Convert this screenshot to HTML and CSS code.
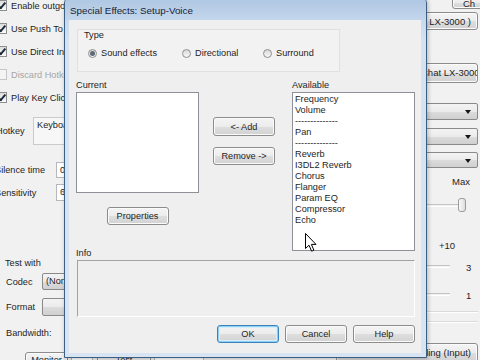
FILE: index.html
```html
<!DOCTYPE html>
<html lang="en">
<head>
    <meta charset="UTF-8">
    <title>Special Effects: Setup-Voice</title>
    <link rel="stylesheet" href="styles.css">
</head>
<body>
<div class="screen">
    <!-- background settings window -->
    <div class="app">
        <div class="app-left">
            <div class="check-row first"><span class="check on"></span>Enable outgoing voice</div>
            <div class="check-row"><span class="check on"></span>Use Push To Talk</div>
            <div class="check-row"><span class="check on"></span>Use Direct Input</div>
            <div class="check-row disabled"><span class="check"></span>Discard Hotkey</div>
            <div class="check-row"><span class="check on"></span>Play Key Click</div>

            <div class="field-row hotkey-row">
                <span class="field-label hotkey-label">Hotkey</span>
                <div class="hotkey-box">Keyboard</div>
            </div>
            <div class="field-row silence-row">
                <span class="field-label wide">Silence time</span>
                <div class="edit-box">0</div>
            </div>
            <div class="field-row sens-row">
                <span class="field-label wide">Sensitivity</span>
                <div class="edit-box">6</div>
            </div>

            <div class="test-label">Test with</div>
            <div class="field-row codec-row">
                <span class="field-label short">Codec</span>
                <div class="combo small">(None)</div>
            </div>
            <div class="field-row format-row">
                <span class="field-label short">Format</span>
                <div class="combo small"></div>
            </div>
            <div class="bandwidth">Bandwidth:</div>

            <div class="bottom-row">
                <button class="btn monitor">Monitor</button>
                <div class="edit-box tiny"></div>
                <button class="btn test">Test</button>
                <div class="edit-box tiny wide"></div>
            </div>
        </div>

        <div class="app-right">
            <button class="btn top-btn">Ch</button>
            <button class="btn lx-btn">(Logitech Chat LX-3000 )</button>
            <div class="btn lx-field">Chat LX-3000 (USB)</div>
            <div class="combo"></div>
            <div class="combo second"></div>
            <div class="combo third"></div>
            <div class="max-label">Max</div>
            <div class="slider">
                <span class="track"></span>
                <span class="thumb"></span>
            </div>
            <div class="plus10">+10</div>
            <div class="level first-level"><span class="track"></span><span class="num">3</span></div>
            <div class="level second-level"><span class="track"></span><span class="num">1</span></div>
            <div class="sep"></div>
            <div class="sep next"></div>
            <button class="btn rec-btn">Recording (Input)</button>
        </div>
    </div>

    <!-- dialog window -->
    <div class="dialog">
        <div class="title-bar">Special Effects: Setup-Voice</div>
        <div class="client">
            <div class="type-group">
                <div class="group-label">Type</div>
                <div class="radio-row">
                    <label class="radio"><span class="radio-dot on"></span>Sound effects</label>
                    <label class="radio"><span class="radio-dot"></span>Directional</label>
                    <label class="radio"><span class="radio-dot"></span>Surround</label>
                </div>
            </div>

            <div class="lists">
                <div class="col">
                    <div class="caption">Current</div>
                    <div class="listbox current"></div>
                    <button class="btn props">Properties</button>
                </div>
                <div class="col mid">
                    <button class="btn add">&lt;- Add</button>
                    <button class="btn remove">Remove -&gt;</button>
                </div>
                <div class="col">
                    <div class="caption">Available</div>
                    <ul class="listbox available">
                        <li>Frequency</li>
                        <li>Volume</li>
                        <li>--------------</li>
                        <li>Pan</li>
                        <li>--------------</li>
                        <li>Reverb</li>
                        <li>I3DL2 Reverb</li>
                        <li>Chorus</li>
                        <li>Flanger</li>
                        <li>Param EQ</li>
                        <li>Compressor</li>
                        <li>Echo</li>
                    </ul>
                </div>
            </div>

            <div class="caption info-caption">Info</div>
            <div class="info-box"></div>

            <div class="dialog-buttons">
                <button class="btn default">OK</button>
                <button class="btn">Cancel</button>
                <button class="btn">Help</button>
            </div>
        </div>
    </div>

    <svg class="cursor" width="13" height="20" viewBox="0 0 13 20">
        <path d="M0.5 0.5 L0.5 15.5 L4 12.2 L6.6 18.2 L8.9 17.2 L6.4 11.4 L11 11.4 Z" fill="#fff" stroke="#000" stroke-width="1" stroke-linejoin="round"/>
    </svg>
</div>
</body>
</html>
```

FILE: styles.css
```css
body {
    margin: 0;
    font-family: "Liberation Sans", Arial, sans-serif;
    font-size: 9.2px;
    color: #1e1e1e;
}
.screen {
    position: relative;
    width: 480px;
    height: 360px;
    overflow: hidden;
    background: #f1f1f1;
}

/* buttons */
.btn {
    display: block;
    font: inherit;
    color: inherit;
    width: 62px;
    height: 18px;
    padding: 0;
    box-sizing: border-box;
    border: 1px solid #8c8c8c;
    border-radius: 3px;
    background: linear-gradient(#f4f4f4 0%, #ececec 50%, #dedede 51%, #d2d2d2 100%);
    box-shadow: inset 0 0 0 1px #fbfbfb;
    white-space: nowrap;
    overflow: hidden;
}
.btn.default {
    border-color: #3c82b8;
    box-shadow: inset 0 0 0 1px #8fd0f4, inset 0 0 0 2px #d4eefc;
}

/* background window */
.app {
    display: flex;
    justify-content: space-between;
    height: 100%;
}
.app-left {
    width: 210px;
    margin-left: -4px;
    display: flex;
    flex-direction: column;
    white-space: nowrap;
}
.app-left > *,
.app-right > * {
    flex-shrink: 0;
}
.check-row {
    width: 72px;
    height: 23px;
    overflow: hidden;
    display: flex;
    align-items: center;
    gap: 4px;
}
.check-row.first {
    margin-top: -6px;
}
.check-row.disabled {
    color: #a6a6a6;
}
.check {
    position: relative;
    flex: none;
    width: 9px;
    height: 9px;
    border: 1px solid #8e8f8f;
    background: linear-gradient(#dcdcdc, #fbfbfb);
}
.check-row.disabled .check {
    border-color: #c6c6c6;
    background: #f4f4f4;
}
.check.on::after {
    content: "";
    position: absolute;
    left: 3px;
    top: 0;
    width: 2px;
    height: 6px;
    border: solid #1c2a3a;
    border-width: 0 2px 2px 0;
    transform: rotate(40deg);
}
.field-row {
    width: 72px;
    overflow: hidden;
    display: flex;
    align-items: center;
}
.field-label {
    flex: none;
}
.hotkey-row {
    margin-top: 8px;
}
.hotkey-label {
    width: 37px;
}
.hotkey-box {
    flex: none;
    width: 120px;
    height: 28px;
    box-sizing: border-box;
    border: 1px solid #cbcbcb;
    background: #f7f7f7;
    padding: 2px 3px;
    line-height: 11px;
}
.field-label.wide {
    width: 61px;
    margin-left: -1px;
}
.edit-box {
    flex: none;
    width: 40px;
    height: 16px;
    box-sizing: border-box;
    border: 1px solid #b5b7bc;
    background: #fff;
    padding-left: 3px;
    line-height: 14px;
}
.silence-row {
    margin-top: 17px;
}
.sens-row {
    margin-top: 6px;
}
.sens-row .edit-box {
    height: 17px;
}
.test-label {
    margin: 57px 0 0 9px;
    line-height: 11px;
}
.field-label.short {
    width: 36px;
    margin-left: 10px;
}
.codec-row {
    margin-top: 4px;
}
.format-row {
    margin-top: 8px;
}
.format-row .combo {
    height: 18px;
}
.bandwidth {
    margin: 12px 0 0 10px;
    line-height: 11px;
}
.bottom-row {
    display: flex;
    gap: 3px;
    margin: 13px 0 0 29px;
}
.bottom-row .btn {
    height: 16px;
}
.monitor {
    width: 43px;
}
.test {
    width: 54px;
    margin-left: 1px;
}
.edit-box.tiny {
    width: 22px;
}
.edit-box.tiny.wide {
    width: 50px;
}

.app-right {
    width: 142px;
    margin-right: 2px;
    display: flex;
    flex-direction: column;
    font-size: 9.5px;
    white-space: nowrap;
}
.app-right .btn {
    width: auto;
}
.app-right .top-btn {
    align-self: flex-end;
    width: 32px;
    height: 12px;
    margin: -3px -6px 0 0;
    text-align: left;
    padding-left: 10px;
}
.app-right .lx-btn {
    height: 18px;
    margin-top: 3px;
    text-align: right;
    padding-right: 6px;
}
.app-right .lx-field {
    height: 20px;
    margin-top: 33px;
    padding-left: 84px;
    line-height: 18px;
}
.combo {
    position: relative;
    height: 17px;
    box-sizing: border-box;
    border: 1px solid #8a8a8a;
    border-radius: 2px;
    background: linear-gradient(#f3f3f3 0%, #ebebeb 50%, #dcdcdc 51%, #d0d0d0 100%);
    line-height: 15px;
    padding-left: 3px;
    overflow: hidden;
}
.combo::after {
    content: "";
    position: absolute;
    right: 6px;
    top: 6px;
    border-left: 3px solid transparent;
    border-right: 3px solid transparent;
    border-top: 4px solid #151515;
}
.combo.small {
    flex: none;
    width: 80px;
}
.app-right .combo {
    margin-top: 20px;
}
.app-right .combo.second {
    margin-top: 8px;
}
.app-right .combo.third {
    margin-top: 7px;
    height: 16px;
}
.max-label {
    align-self: flex-end;
    margin: 8px 8px 0 0;
    line-height: 11px;
}
.slider {
    display: flex;
    align-items: center;
    height: 14px;
    margin: 11px 12px 0 0;
}
.track {
    flex: 1;
    height: 1px;
    border-top: 1px solid #c4c4c4;
    border-bottom: 1px solid #fff;
}
.thumb {
    width: 6px;
    height: 12px;
    border: 1px solid #9a9a9a;
    border-radius: 3px;
    background: linear-gradient(90deg, #fafafa, #dedede);
}
.plus10 {
    align-self: flex-end;
    margin: 28px 23px 0 0;
    line-height: 11px;
}
.level {
    display: flex;
    align-items: center;
    height: 11px;
    margin-top: 11px;
}
.level .track {
    margin-right: 16px;
    margin-top: -3px;
}
.level .num {
    width: 12px;
}
.level.second-level {
    margin-top: 17px;
}
.sep {
    height: 0;
    border-top: 1px solid #dadada;
    border-bottom: 1px solid #fff;
    margin-top: 10px;
}
.sep.next {
    margin-top: 8px;
}
.app-right .rec-btn {
    height: 19px;
    margin-top: 20px;
    text-align: right;
    padding-right: 6px;
}

/* dialog window */
.dialog {
    position: absolute;
    left: 64px;
    top: -3px;
    width: 363px;
    height: 361px;
    box-sizing: border-box;
    display: flex;
    flex-direction: column;
    border: 1px solid #3a5f82;
    border-radius: 6px 6px 0 0;
    background: linear-gradient(#bcd0e8, #d4e2f1 12%, #d8e4f1);
    box-shadow: 1px 1px 4px rgba(0, 0, 0, 0.25);
}
.title-bar {
    height: 22px;
    box-sizing: border-box;
    padding: 4px 0 0 5px;
    line-height: 18px;
    font-size: 9.8px;
    color: #15243a;
    background: linear-gradient(#aec6e2, #c3d6ec);
    border-radius: 5px 5px 0 0;
}
.client {
    flex: 1;
    margin: 0 5px 4px 4px;
    padding: 0 6px 0 7px;
    background: #efefef;
}
.type-group {
    width: 263px;
    height: 43px;
    box-sizing: border-box;
    margin: 9px 0 0 1px;
    padding-left: 6px;
    border: 1px solid #e0e0e0;
    background: #f2f2f2;
}
.group-label {
    line-height: 11px;
}
.radio-row {
    display: grid;
    grid-template-columns: 94px 81px auto;
    margin: 7px 0 0 4px;
    line-height: 11px;
}
.radio {
    display: flex;
    align-items: center;
    gap: 4px;
}
.radio-dot {
    position: relative;
    width: 7px;
    height: 7px;
    border: 1px solid #8f8f8f;
    border-radius: 50%;
    background: linear-gradient(#d8d8d8, #f8f8f8);
}
.radio-dot.on::after {
    content: "";
    position: absolute;
    left: 1px;
    top: 1px;
    width: 5px;
    height: 5px;
    border-radius: 50%;
    background: #5c6a78;
}
.lists {
    display: grid;
    grid-template-columns: 123px 1fr 123px;
    margin-top: 8px;
}
.caption {
    line-height: 11px;
    margin-bottom: 1px;
}
.listbox {
    box-sizing: border-box;
    border: 1px solid #8e9197;
    background: #fff;
}
.listbox.current {
    height: 101px;
}
.btn.props {
    margin: 14px auto 0;
}
.col.mid {
    padding: 37px 0 0 14px;
}
.btn.add {
    height: 19px;
}
.btn.remove {
    margin-top: 11px;
}
.listbox.available {
    height: 159px;
    margin: 0;
    padding: 1px 2px;
    list-style: none;
    line-height: 11px;
}
.info-caption {
    margin: -3px 0 0;
}
.info-box {
    width: 338px;
    height: 57px;
    box-sizing: border-box;
    margin: 1px 0 0 1px;
    border: 1px solid #fff;
    border-top-color: #a2a2a2;
    border-left-color: #a2a2a2;
}
.dialog-buttons {
    display: flex;
    justify-content: flex-end;
    gap: 6px;
    margin-top: 8px;
}

.cursor {
    position: absolute;
    left: 305px;
    top: 233px;
}
```
